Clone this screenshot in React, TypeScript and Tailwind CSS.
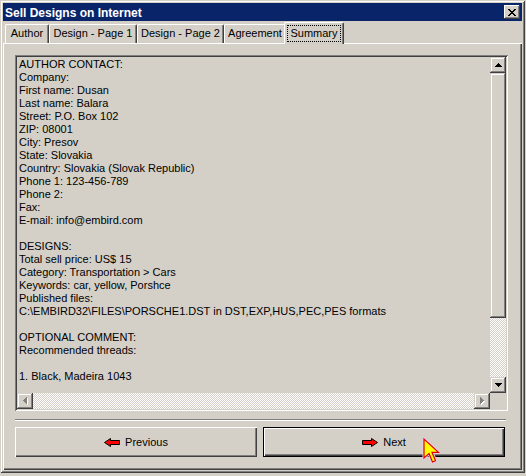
import React from "react";

const lines = [
  "AUTHOR CONTACT:",
  "Company:",
  "First name: Dusan",
  "Last name: Balara",
  "Street: P.O. Box 102",
  "ZIP: 08001",
  "City: Presov",
  "State: Slovakia",
  "Country: Slovakia (Slovak Republic)",
  "Phone 1: 123-456-789",
  "Phone 2:",
  "Fax:",
  "E-mail: info@embird.com",
  "",
  "DESIGNS:",
  "Total sell price: US$ 15",
  "Category: Transportation > Cars",
  "Keywords: car, yellow, Porshce",
  "Published files:",
  "C:\\EMBIRD32\\FILES\\PORSCHE1.DST in DST,EXP,HUS,PEC,PES formats",
  "",
  "OPTIONAL COMMENT:",
  "Recommended threads:",
  "",
  "1. Black, Madeira 1043",
];

function SBtn({ children }: { children?: React.ReactNode }) {
  return (
    <div className="w-[16px] h-[16px] shrink-0 bg-[#d4d0c8] shadow-[inset_-1px_-1px_0_#404040,inset_1px_1px_0_#d4d0c8,inset_-2px_-2px_0_#808080,inset_2px_2px_0_#ffffff] flex items-center justify-center">
      {children}
    </div>
  );
}

function Tab({ label, w }: { label: string; w: string }) {
  return (
    <div
      className={`${w} h-[19px] bg-[#d4d0c8] border-t border-l border-r border-t-white border-l-white border-r-[#404040] rounded-t-[2px] shadow-[inset_-1px_0_0_#808080] flex justify-center pt-[2px] leading-[13px] whitespace-nowrap`}
    >
      {label}
    </div>
  );
}

function LeftArrowIcon() {
  return (
    <svg width="16" height="9" viewBox="0 0 16 9">
      <polygon
        points="0.5,4.5 6.5,0.5 6.5,2.5 15.5,2.5 15.5,6.5 6.5,6.5 6.5,8.5"
        fill="#ff0000"
        stroke="#000000"
        strokeWidth="1"
      />
    </svg>
  );
}

function RightArrowIcon() {
  return (
    <svg width="16" height="9" viewBox="0 0 16 9">
      <polygon
        points="15.5,4.5 9.5,0.5 9.5,2.5 0.5,2.5 0.5,6.5 9.5,6.5 9.5,8.5"
        fill="#ff0000"
        stroke="#000000"
        strokeWidth="1"
      />
    </svg>
  );
}

export default function App() {
  return (
    <div className="w-[526px] h-[476px] bg-[#d4d0c8] relative overflow-hidden text-black text-[11px] font-['Liberation_Sans',Arial,sans-serif]">
      <div className="w-[525px] h-[473px] flex flex-col p-[3px] shadow-[inset_1px_1px_0_#d4d0c8,inset_-1px_-1px_0_#404040,inset_2px_2px_0_#ffffff,inset_-2px_-2px_0_#808080]">
        {/* Title bar */}
        <div className="h-[18px] shrink-0 bg-[#0a246a] flex items-center justify-between pl-[2px] pr-[2px]">
          <span className="text-white font-bold text-[12px] leading-[18px] pt-[1px]">
            Sell Designs on Internet
          </span>
          <div className="w-[16px] h-[14px] bg-[#d4d0c8] shadow-[inset_-1px_-1px_0_#404040,inset_1px_1px_0_#ffffff,inset_-2px_-2px_0_#808080] flex items-center justify-center">
            <svg width="8" height="7" viewBox="0 0 8 7" shapeRendering="crispEdges">
              <path
                d="M0 0h2v1h1v1h2v-1h1v-1h2v1h-1v1h-1v1h-1v1h1v1h1v1h1v1h-2v-1h-1v-1h-2v1h-1v1h-2v-1h1v-1h1v-1h1v-1h-1v-1h-1v-1h-1z"
                fill="#000"
              />
            </svg>
          </div>
        </div>

        {/* Tabs row */}
        <div className="h-[21px] mt-[1px] shrink-0 flex items-end pl-[2px]">
          <Tab label="Author" w="w-[44px]" />
          <Tab label="Design - Page 1" w="w-[88px]" />
          <Tab label="Design - Page 2" w="w-[87px]" />
          <Tab label="Agreement" w="w-[62px]" />
          <div className="relative z-10 -mb-px w-[60px] h-[22px] self-start bg-[#d4d0c8] border-t border-l border-r border-t-white border-l-white border-r-[#404040] rounded-t-[2px] shadow-[inset_-1px_0_0_#808080] flex justify-center pt-[2px] -ml-[2px]">
            <div className="w-[54px] h-[17px] border border-dotted border-black flex justify-center leading-[13px] pt-[1px]">
              Summary
            </div>
          </div>
        </div>

        {/* Panel */}
        <div className="flex-1 flex flex-col pt-[12px] pl-[12px] shadow-[inset_1px_1px_0_#ffffff,inset_-1px_-1px_0_#404040,inset_-2px_-2px_0_#808080]">
          {/* Edit box */}
          <div className="w-[493px] h-[356px] p-[2px] flex flex-col shadow-[inset_1px_1px_0_#808080,inset_-1px_-1px_0_#ffffff,inset_2px_2px_0_#404040,inset_-2px_-2px_0_#d4d0c8]">
            <div className="flex flex-1 min-h-0">
              <div className="flex-1 pl-[2px] pt-[1px] leading-[13px] overflow-hidden">
                {lines.map((l, i) => (
                  <div key={i} className="h-[13px] whitespace-pre">
                    {l}
                  </div>
                ))}
              </div>
              <div className="w-[16px] flex flex-col">
                <SBtn>
                  <svg width="7" height="4" viewBox="0 0 7 4" shapeRendering="crispEdges">
                    <path d="M3 0h1v1h1v1h1v1h1v1h-7v-1h1v-1h1v-1h1z" fill="#000" />
                  </svg>
                </SBtn>
                <div className="h-[245px] shrink-0 bg-[#d4d0c8] shadow-[inset_-1px_-1px_0_#404040,inset_1px_1px_0_#d4d0c8,inset_-2px_-2px_0_#808080,inset_2px_2px_0_#ffffff]" />
                <div className="flex-1 bg-[image:repeating-conic-gradient(#d4d0c8_0%_25%,#ffffff_0%_50%)] bg-[length:2px_2px]" />
                <SBtn>
                  <svg width="7" height="4" viewBox="0 0 7 4" shapeRendering="crispEdges">
                    <path d="M0 0h7v1h-1v1h-1v1h-1v1h-1v-1h-1v-1h-1v-1h-1z" fill="#000" />
                  </svg>
                </SBtn>
              </div>
            </div>
            <div className="h-[16px] shrink-0 flex">
              <SBtn>
                <svg width="5" height="8" viewBox="0 0 5 8" shapeRendering="crispEdges">
                  <path d="M4 1h1v7h-1v-1h-1v-1h-1v-1h-1v-1h1v-1h1v-1h1z" fill="#ffffff" />
                  <path d="M3 0h1v7h-1v-1h-1v-1h-1v-1h-1v-1h1v-1h1v-1h1z" fill="#808080" />
                </svg>
              </SBtn>
              <div className="flex-1 bg-[image:repeating-conic-gradient(#d4d0c8_0%_25%,#ffffff_0%_50%)] bg-[length:2px_2px]" />
              <SBtn>
                <svg width="5" height="8" viewBox="0 0 5 8" shapeRendering="crispEdges">
                  <path d="M1 1h1v1h1v1h1v1h1v1h-1v1h-1v1h-1v1h-1z" fill="#ffffff" />
                  <path d="M0 0h1v1h1v1h1v1h1v1h-1v1h-1v1h-1v1h-1z" fill="#808080" />
                </svg>
              </SBtn>
              <div className="w-[16px] bg-[#d4d0c8]" />
            </div>
          </div>

          {/* Separator */}
          <div className="w-[491px] h-[2px] mt-[8px] border-t border-t-[#808080] border-b border-b-white" />

          {/* Buttons */}
          <div className="w-[490px] mt-[6px] flex gap-[6px]">
            <div className="w-[242px] h-[30px] flex items-center justify-center gap-[5px] bg-[#d4d0c8] shadow-[inset_1px_1px_0_#ffffff,inset_-1px_-1px_0_#404040,inset_-2px_-2px_0_#808080]">
              <LeftArrowIcon />
              <span className="leading-[13px] pt-[1px]">Previous</span>
            </div>
            <div className="w-[242px] h-[30px] border border-black flex items-center justify-center gap-[5px] bg-[#d4d0c8] shadow-[inset_1px_1px_0_#ffffff,inset_-1px_-1px_0_#404040,inset_-2px_-2px_0_#808080]">
              <RightArrowIcon />
              <span className="leading-[13px] pt-[1px]">Next</span>
            </div>
          </div>
        </div>
      </div>

      {/* Mouse cursor */}
      <svg className="absolute left-[422px] top-[437px]" width="20" height="28" viewBox="0 0 20 28">
        <polygon
          points="2,2 2,21 7,16.5 10.5,25 13.5,23.7 10,15.3 16.5,15.3"
          fill="#ffff00"
          stroke="#efc6ef"
          strokeWidth="3"
          strokeLinejoin="round"
        />
        <polygon
          points="2,2 2,21 7,16.5 10.5,25 13.5,23.7 10,15.3 16.5,15.3"
          fill="#ffff00"
          stroke="#e00000"
          strokeWidth="1.2"
          strokeLinejoin="miter"
        />
      </svg>
    </div>
  );
}
